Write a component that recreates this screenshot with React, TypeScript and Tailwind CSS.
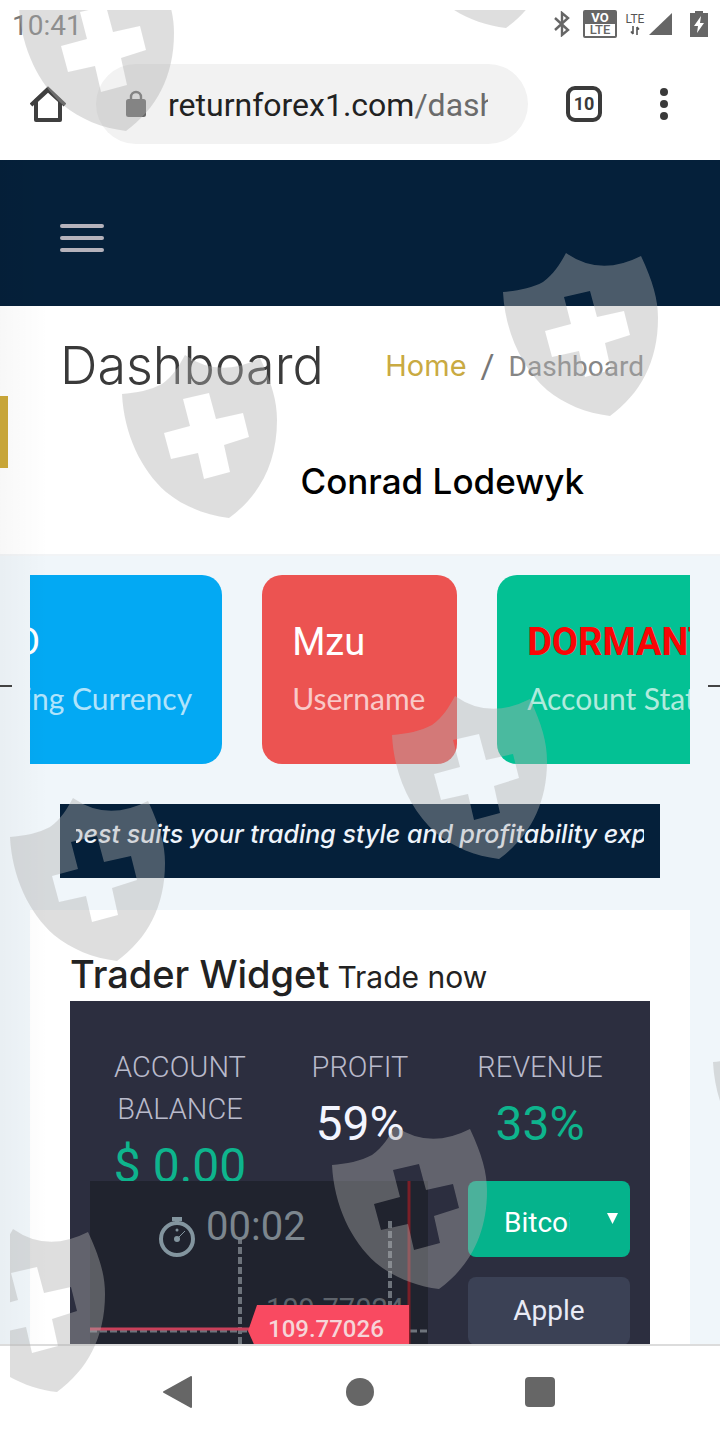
import React from "react";

const SHIELD =
  "M64 1Q98 25 139 4C151 30 156 47 156 66C156 110 138 142 108 164C84 161 62 152 45 138C20 116 3 80 1 40C15 39 30 36 41 30C52 22 58 12 64 1Z" +
  "M62 45L69 72L43 79L50 105L77 99L83 125L109 118L103 91L128 83L122 59L95 65L88 39Z";

const SHIELDS: [number, number][] = [
  [18, -33],
  [398, -136],
  [502, 252],
  [121, 354],
  [391, 695],
  [9, 797],
  [712, 1022],
  [331, 1125],
  [-51, 1228],
];

function Watermark() {
  return (
    <svg
      aria-hidden="true"
      className="pointer-events-none absolute left-0 top-0 z-30"
      width="720"
      height="1440"
      viewBox="0 0 720 1440"
    >
      <clipPath id="watermark-area">
        <rect x="10" y="10" width="710" height="1430" />
      </clipPath>
      <g clipPath="url(#watermark-area)" fill="#b0b0b0" fillOpacity="0.415" fillRule="evenodd">
        {SHIELDS.map(([x, y]) => (
          <path key={`${x}-${y}`} d={SHIELD} transform={`translate(${x} ${y})`} />
        ))}
      </g>
    </svg>
  );
}

function StatusBar() {
  return (
    <div className="flex h-12 shrink-0 items-center justify-between pl-3 pr-3 text-[#777]">
      <span className="pt-1 text-[28px] leading-none">10:41</span>
      <div className="flex items-center">
        <svg width="18" height="26" viewBox="0 0 18 26" fill="none" stroke="#666" strokeWidth="2.4">
          <path d="M2 7L15 19L9 24V2L15 7L2 19" />
        </svg>
        <div className="ml-3 flex h-7 w-[34px] flex-col overflow-hidden rounded-xs border-2 border-[#666] text-center text-[13px] font-bold leading-3">
          <span className="bg-[#666] text-white">VO</span>
          <span className="font-medium text-[#666]">LTE</span>
        </div>
        <div className="ml-2 flex w-5 flex-col items-center text-xs leading-3 text-[#555]">
          <span>LTE</span>
          <svg width="10" height="11" viewBox="0 0 10 11" fill="none" stroke="#555" strokeWidth="1.6">
            <path d="M3 1V9M1 6.500L3 9M7 10V2M9 4.500L7 2" />
          </svg>
        </div>
        <svg className="ml-1" width="23" height="22" viewBox="0 0 23 22" fill="#666">
          <path d="M23 0V22H0Z" />
        </svg>
        <svg className="ml-[18px]" width="18" height="26" viewBox="0 0 18 26">
          <path d="M5 0H13V2H18V26H0V2H5Z" fill="#666" />
          <path d="M11 5L4 15H8L7 22L14 12H10Z" fill="#fff" />
        </svg>
      </div>
    </div>
  );
}

function BrowserBar() {
  return (
    <div className="flex h-28 shrink-0 items-center pl-[30px] pr-12">
      <button type="button" aria-label="Home" className="shrink-0">
        <svg width="36" height="36" viewBox="0 0 36 36" fill="#fff" stroke="#3f3f3f" strokeWidth="4">
          <path d="M1 19L18 3L35 19" fill="none" />
          <path d="M6 15V34H30V15L18 4Z" strokeLinejoin="round" />
        </svg>
      </button>
      <div className="ml-[30px] flex h-20 min-w-0 flex-1 items-center rounded-full bg-[#f2f2f2] pl-[30px] pr-10">
        <svg className="shrink-0" width="20" height="28" viewBox="0 0 20 28">
          <path d="M5 11V7A5 5 0 0 1 15 7V11" fill="none" stroke="#666" strokeWidth="2.400" />
          <rect y="9" width="20" height="18" rx="2.500" fill="#666" />
        </svg>
        <span className="ml-[22px] min-w-0 flex-1 overflow-hidden whitespace-nowrap pt-0.5 text-[32px] leading-10 text-[#222]">
          returnforex1.com<span className="text-[#6b6b6b]">/dashboard</span>
        </span>
      </div>
      <button
        type="button"
        aria-label="10 open tabs"
        className="ml-[38px] flex h-9 w-9 shrink-0 items-center justify-center rounded-[9px] border-4 border-[#3a3a3a] text-lg font-bold leading-none text-[#3a3a3a]"
      >
        10
      </button>
      <button type="button" aria-label="Menu" className="ml-[54px] flex w-4 shrink-0 flex-col items-center gap-1">
        <span className="h-2 w-2 rounded-full bg-[#3a3a3a]" />
        <span className="h-2 w-2 rounded-full bg-[#3a3a3a]" />
        <span className="h-2 w-2 rounded-full bg-[#3a3a3a]" />
      </button>
    </div>
  );
}

function InfoCard({ tone, value, label }: { tone: string; value: React.ReactNode; label: string }) {
  return (
    <div className={`h-[189px] min-w-[195px] flex-none rounded-[20px] px-[30px] pt-10 text-white ${tone}`}>
      <div className="text-[38px] leading-[54px]">{value}</div>
      <div className="font-['Lato',sans-serif] text-[30px] leading-[58px] text-white/70">{label}</div>
    </div>
  );
}

function Stat({ label, value, tone }: { label: string; value: string; tone: string }) {
  return (
    <div className="text-center">
      <div className="px-4 text-[29px] font-light leading-[42px] text-[#b9bacb]">{label}</div>
      <div className={`text-[48px] leading-[72px] ${tone}`}>{value}</div>
    </div>
  );
}

function Chart() {
  return (
    <div className="relative min-w-0 flex-1 self-stretch overflow-hidden bg-[#20232e]">
      <svg className="absolute left-0 top-0" width="338" height="170" viewBox="0 0 338 170">
        <path d="M150 56V170M300 40V170" stroke="#6d737b" strokeWidth="4" strokeDasharray="7 3" fill="none" />
        <path d="M0 150H338" stroke="#6d737b" strokeWidth="3" strokeDasharray="7 3" />
        <path d="M0 148H170" stroke="#c9405a" strokeWidth="3" />
        <path d="M319 0V170" stroke="#7b1f27" strokeWidth="3" />
      </svg>
      <div className="relative flex items-center gap-2 pl-[68px] pt-8">
        <svg width="40" height="44" viewBox="0 0 40 44" fill="none" stroke="#83959f">
          <circle cx="19" cy="26" r="16" strokeWidth="4" />
          <path d="M14 6H24M19 6V10" strokeWidth="4" />
          <path d="M19 26L27 18" strokeWidth="1" />
          <circle cx="19" cy="26" r="3" fill="#83959f" stroke="none" />
          <circle cx="19" cy="17" r="1.500" fill="#83959f" stroke="none" />
        </svg>
        <span className="-mt-4 text-[40px] leading-[60px] text-[#7c868e]">00:02</span>
      </div>
      <span className="absolute left-[176px] top-[112px] text-[29px] leading-8 text-[#5d636b]">109.77024</span>
      <div className="absolute left-[158px] top-[123px] h-[47px] w-[161px]">
        <svg className="absolute inset-0" width="161" height="47" viewBox="0 0 161 47" fill="#f94a61">
          <path d="M9 1H161V47H9L0 27Z" />
        </svg>
        <span className="relative block pl-5 text-2xl font-medium leading-[50px] text-[#f6d5d8]">109.77026</span>
      </div>
    </div>
  );
}

export default function App() {
  return (
    <div className="relative flex h-screen flex-col overflow-hidden bg-white font-['Roboto',sans-serif]">
      <StatusBar />
      <BrowserBar />

      <div className="relative min-h-0 flex-1 overflow-hidden bg-[#f0f6fa]">
        <header className="h-[146px] bg-[#05203a] px-[60px] pt-16">
          <button type="button" aria-label="Toggle navigation" className="flex w-11 flex-col gap-2">
            <span className="h-1 rounded-full bg-[#b5b2bb]" />
            <span className="h-1 rounded-full bg-[#b5b2bb]" />
            <span className="h-1 rounded-full bg-[#b5b2bb]" />
          </button>
        </header>

        <section className="h-[250px] border-b-2 border-[#f2f4f6] bg-white px-[60px] pt-6">
          <div className="flex items-center justify-between pr-4">
            <h1 className="font-['Inter',sans-serif] text-[52px] font-light leading-[72px] text-[#3a3a3a]">Dashboard</h1>
            <nav aria-label="Breadcrumb" className="flex items-center gap-[14px] text-[28px] leading-10">
              <a href="#home" className="font-['Inter',sans-serif] text-[29px] text-[#c9aa42]">Home</a>
              <span className="text-[34px] text-[#777]">/</span>
              <span className="pt-0.5 text-[#868686]">Dashboard</span>
            </nav>
          </div>
          <div className="mt-14 pr-[76px] text-right font-['Inter',sans-serif] text-[35px] font-medium leading-[46px] text-black">
            Conrad Lodewyk
          </div>
        </section>

        <section className="mt-[19px] flex items-center gap-[18px]">
          <span className="mt-8 h-0.5 w-3 shrink-0 bg-[#444]" />
          <div className="min-w-0 flex-1 overflow-hidden">
            <div className="-ml-[92px] flex gap-10">
              <InfoCard tone="bg-[#03a9f3]" value="USD" label="Trading Currency" />
              <InfoCard tone="bg-[#ec5351]" value="Mzu" label="Username" />
              <InfoCard
                tone="bg-[#03c194]"
                value={<span className="font-bold text-[#fb0505]">DORMANT</span>}
                label="Account Status"
              />
            </div>
          </div>
          <span className="mt-8 h-0.5 w-3 shrink-0 bg-[#444]" />
        </section>

        <section className="mx-[60px] mt-10 h-[74px] bg-[#05203a] px-4 pt-2.5">
          <div className="overflow-hidden">
            <p className="-ml-2 whitespace-nowrap font-['Inter',sans-serif] text-[25px] font-medium italic leading-10 text-[#eef4fb]">
              best suits your trading style and profitability expectations
            </p>
          </div>
        </section>

        <section className="mx-[30px] mt-8 bg-white px-10 pt-10">
          <h2 className="flex h-[51px] items-baseline gap-2 whitespace-nowrap font-['Inter',sans-serif] text-[38px] font-medium leading-[48px] text-[#222]">
            Trader Widget <small className="text-[30px] font-normal">Trade now</small>
          </h2>
          <div className="bg-[#2c2e3f] px-5 pb-5">
            <div className="grid h-[180px] grid-cols-3 overflow-hidden pt-[45px]">
              <Stat label="ACCOUNT BALANCE" value="$ 0.00" tone="text-[#0eb48d]" />
              <Stat label="PROFIT" value="59%" tone="text-[#f3f5ff]" />
              <Stat label="REVENUE" value="33%" tone="text-[#0eb48d]" />
            </div>
            <div className="flex gap-10">
              <Chart />
              <div className="flex w-[162px] flex-col gap-5 text-[28px]">
                <div className="relative">
                  <select
                    aria-label="Asset"
                    className="h-[76px] w-full appearance-none rounded-lg bg-[#05b38c] pb-0 pl-9 pr-[60px] pt-2 text-white"
                  >
                    <option>Bitcoin</option>
                    <option>Ethereum</option>
                  </select>
                  <svg className="pointer-events-none absolute right-3 top-8" width="11" height="11" viewBox="0 0 11 11" fill="#fff">
                    <path d="M0 0H11L5.500 11Z" />
                  </svg>
                </div>
                <button type="button" className="h-[68px] rounded-lg bg-[#3b4155] text-[#e9ebf6]">
                  Apple
                </button>
              </div>
            </div>
          </div>
        </section>

        <div className="pointer-events-none absolute inset-y-0 left-0 w-12 bg-linear-to-r from-black/3 to-transparent" />
        <button type="button" aria-label="Open panel" className="absolute left-0 top-[236px] h-[72px] w-2 bg-[#c7a538]" />
      </div>

      <nav
        aria-label="System navigation"
        className="grid h-24 shrink-0 grid-cols-3 place-items-center border-t-2 border-[#dcdcdc] bg-white px-[90px] pb-0.5"
      >
        <button type="button" aria-label="Back">
          <svg width="34" height="32" viewBox="0 0 34 32" fill="#666" stroke="#666" strokeWidth="2" strokeLinejoin="round">
            <path d="M1 16L28 1V31Z" />
          </svg>
        </button>
        <button type="button" aria-label="Home screen" className="h-7 w-7 rounded-full bg-[#666]" />
        <button type="button" aria-label="Recent apps" className="h-[30px] w-[30px] rounded-sm bg-[#666]" />
      </nav>

      <Watermark />
    </div>
  );
}
